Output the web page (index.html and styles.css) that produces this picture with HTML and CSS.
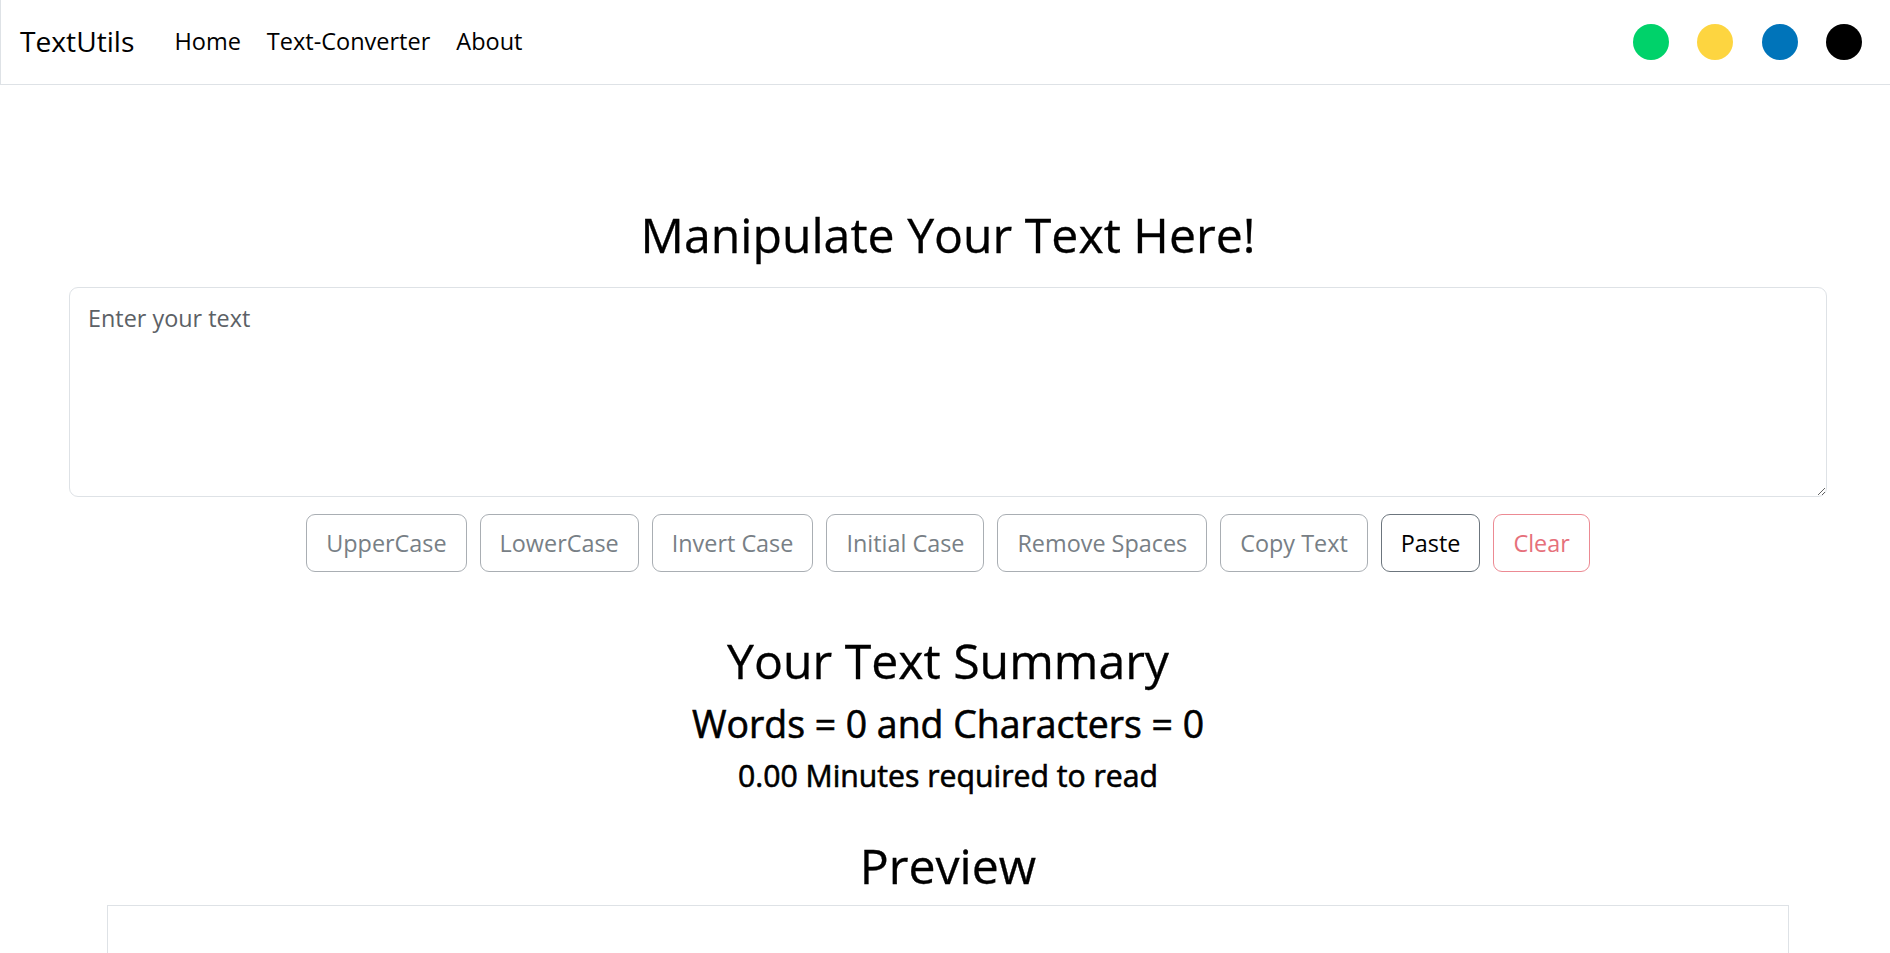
FILE: index.html
```html
<!DOCTYPE html>
<html lang="en">
<head>
<meta charset="utf-8">
<title>TextUtils</title>
<link rel="stylesheet" href="styles.css">
</head>
<body>
<nav class="navbar">
  <a class="brand" href="#">TextUtils</a>
  <ul class="nav-links">
    <li><a href="#">Home</a></li>
    <li><a href="#">Text-Converter</a></li>
    <li><a href="#">About</a></li>
  </ul>
  <div class="themes">
    <span class="dot dot-green"></span>
    <span class="dot dot-yellow"></span>
    <span class="dot dot-blue"></span>
    <span class="dot dot-black"></span>
  </div>
</nav>
<main class="main">
  <h1 class="title">Manipulate Your Text Here!</h1>
  <textarea class="text-input" placeholder="Enter your text"></textarea>
  <div class="actions">
    <button class="btn btn-secondary" disabled>UpperCase</button>
    <button class="btn btn-secondary" disabled>LowerCase</button>
    <button class="btn btn-secondary" disabled>Invert Case</button>
    <button class="btn btn-secondary" disabled>Initial Case</button>
    <button class="btn btn-secondary" disabled>Remove Spaces</button>
    <button class="btn btn-secondary" disabled>Copy Text</button>
    <button class="btn btn-paste">Paste</button>
    <button class="btn btn-danger" disabled>Clear</button>
  </div>
  <section class="summary">
    <h1 class="summary-title">Your Text Summary</h1>
    <h3 class="counts">Words = 0 and Characters = 0</h3>
    <h4 class="read-time">0.00 Minutes required to read</h4>
    <h1 class="preview-title">Preview</h1>
    <div class="preview-box"></div>
  </section>
</main>
</body>
</html>
```
FILE: styles.css
```css
* { box-sizing: border-box; }

html, body {
  margin: 0;
  padding: 0;
  background: #fff;
}

body {
  font-family: "Open Sans", "Noto Sans", sans-serif;
  font-size: 23.4px;
  color: #000;
}

.navbar {
  display: flex;
  align-items: center;
  height: 85px;
  padding: 0 28px 0 19px;
  border-left: 1px solid #dee2e6;
  border-bottom: 1px solid #dee2e6;
}

.brand {
  font-size: 28.2px;
  color: #000;
  text-decoration: none;
  margin-right: 27px;
  padding-bottom: 2px;
}

.nav-links {
  display: flex;
  list-style: none;
  margin: 0;
  padding: 0;
}

.nav-links a {
  display: block;
  padding: 0 13px 2px;
  font-size: 23.5px;
  color: #000;
  text-decoration: none;
}

.themes {
  margin-left: auto;
  display: flex;
  gap: 28.3px;
}

.dot {
  width: 36px;
  height: 36px;
  border-radius: 50%;
  display: block;
}
.dot-green { background: #00d26a; }
.dot-yellow { background: #fdd540; }
.dot-blue { background: #0074ba; }
.dot-black { background: #000; }

.main {
  margin: 0 63px 0 69px;
  padding-top: 120px;
}

.title,
.summary-title,
.preview-title {
  margin: 0;
  font-size: 48.2px;
  line-height: 58px;
  font-weight: 400;
  text-align: center;
  -webkit-text-stroke: 0.3px #000;
}

.text-input {
  display: block;
  width: 100%;
  height: 210px;
  margin-top: 24px;
  padding: 12.5px 18px;
  border: 1px solid #dee2e6;
  border-radius: 9px;
  font-family: inherit;
  font-size: 23.4px;
  line-height: 35px;
  color: #212529;
  outline: none;
}
.text-input::placeholder {
  color: #5c6166;
}

.actions {
  display: flex;
  justify-content: center;
  gap: 13px;
  margin-top: 16.5px;
}

.btn {
  font-family: inherit;
  font-size: 23.4px;
  line-height: 36px;
  padding: 10px 19px;
  border: 1px solid;
  border-radius: 9px;
  background: #fff;
}

.btn-secondary {
  color: #787f86;
  border-color: #a9aeb3;
}

.btn-paste {
  color: #000;
  border-color: #6c757d;
}

.btn-danger {
  color: #e6707b;
  border-color: #ec8a93;
}

.summary {
  text-align: center;
}

.summary-title {
  margin-top: 59.5px;
}

.counts {
  margin: 13px 0 0;
  font-size: 37.4px;
  line-height: 43px;
  font-weight: 400;
  -webkit-text-stroke: 0.6px #000;
}

.read-time {
  margin: 13px 0 0;
  font-size: 30.2px;
  line-height: 35px;
  font-weight: 400;
  -webkit-text-stroke: 0.6px #000;
}

.preview-title {
  margin-top: 42.5px;
}

.preview-box {
  margin: 11px 38px 0;
  min-height: 200px;
  border: 1px solid #dee2e6;
}
```
